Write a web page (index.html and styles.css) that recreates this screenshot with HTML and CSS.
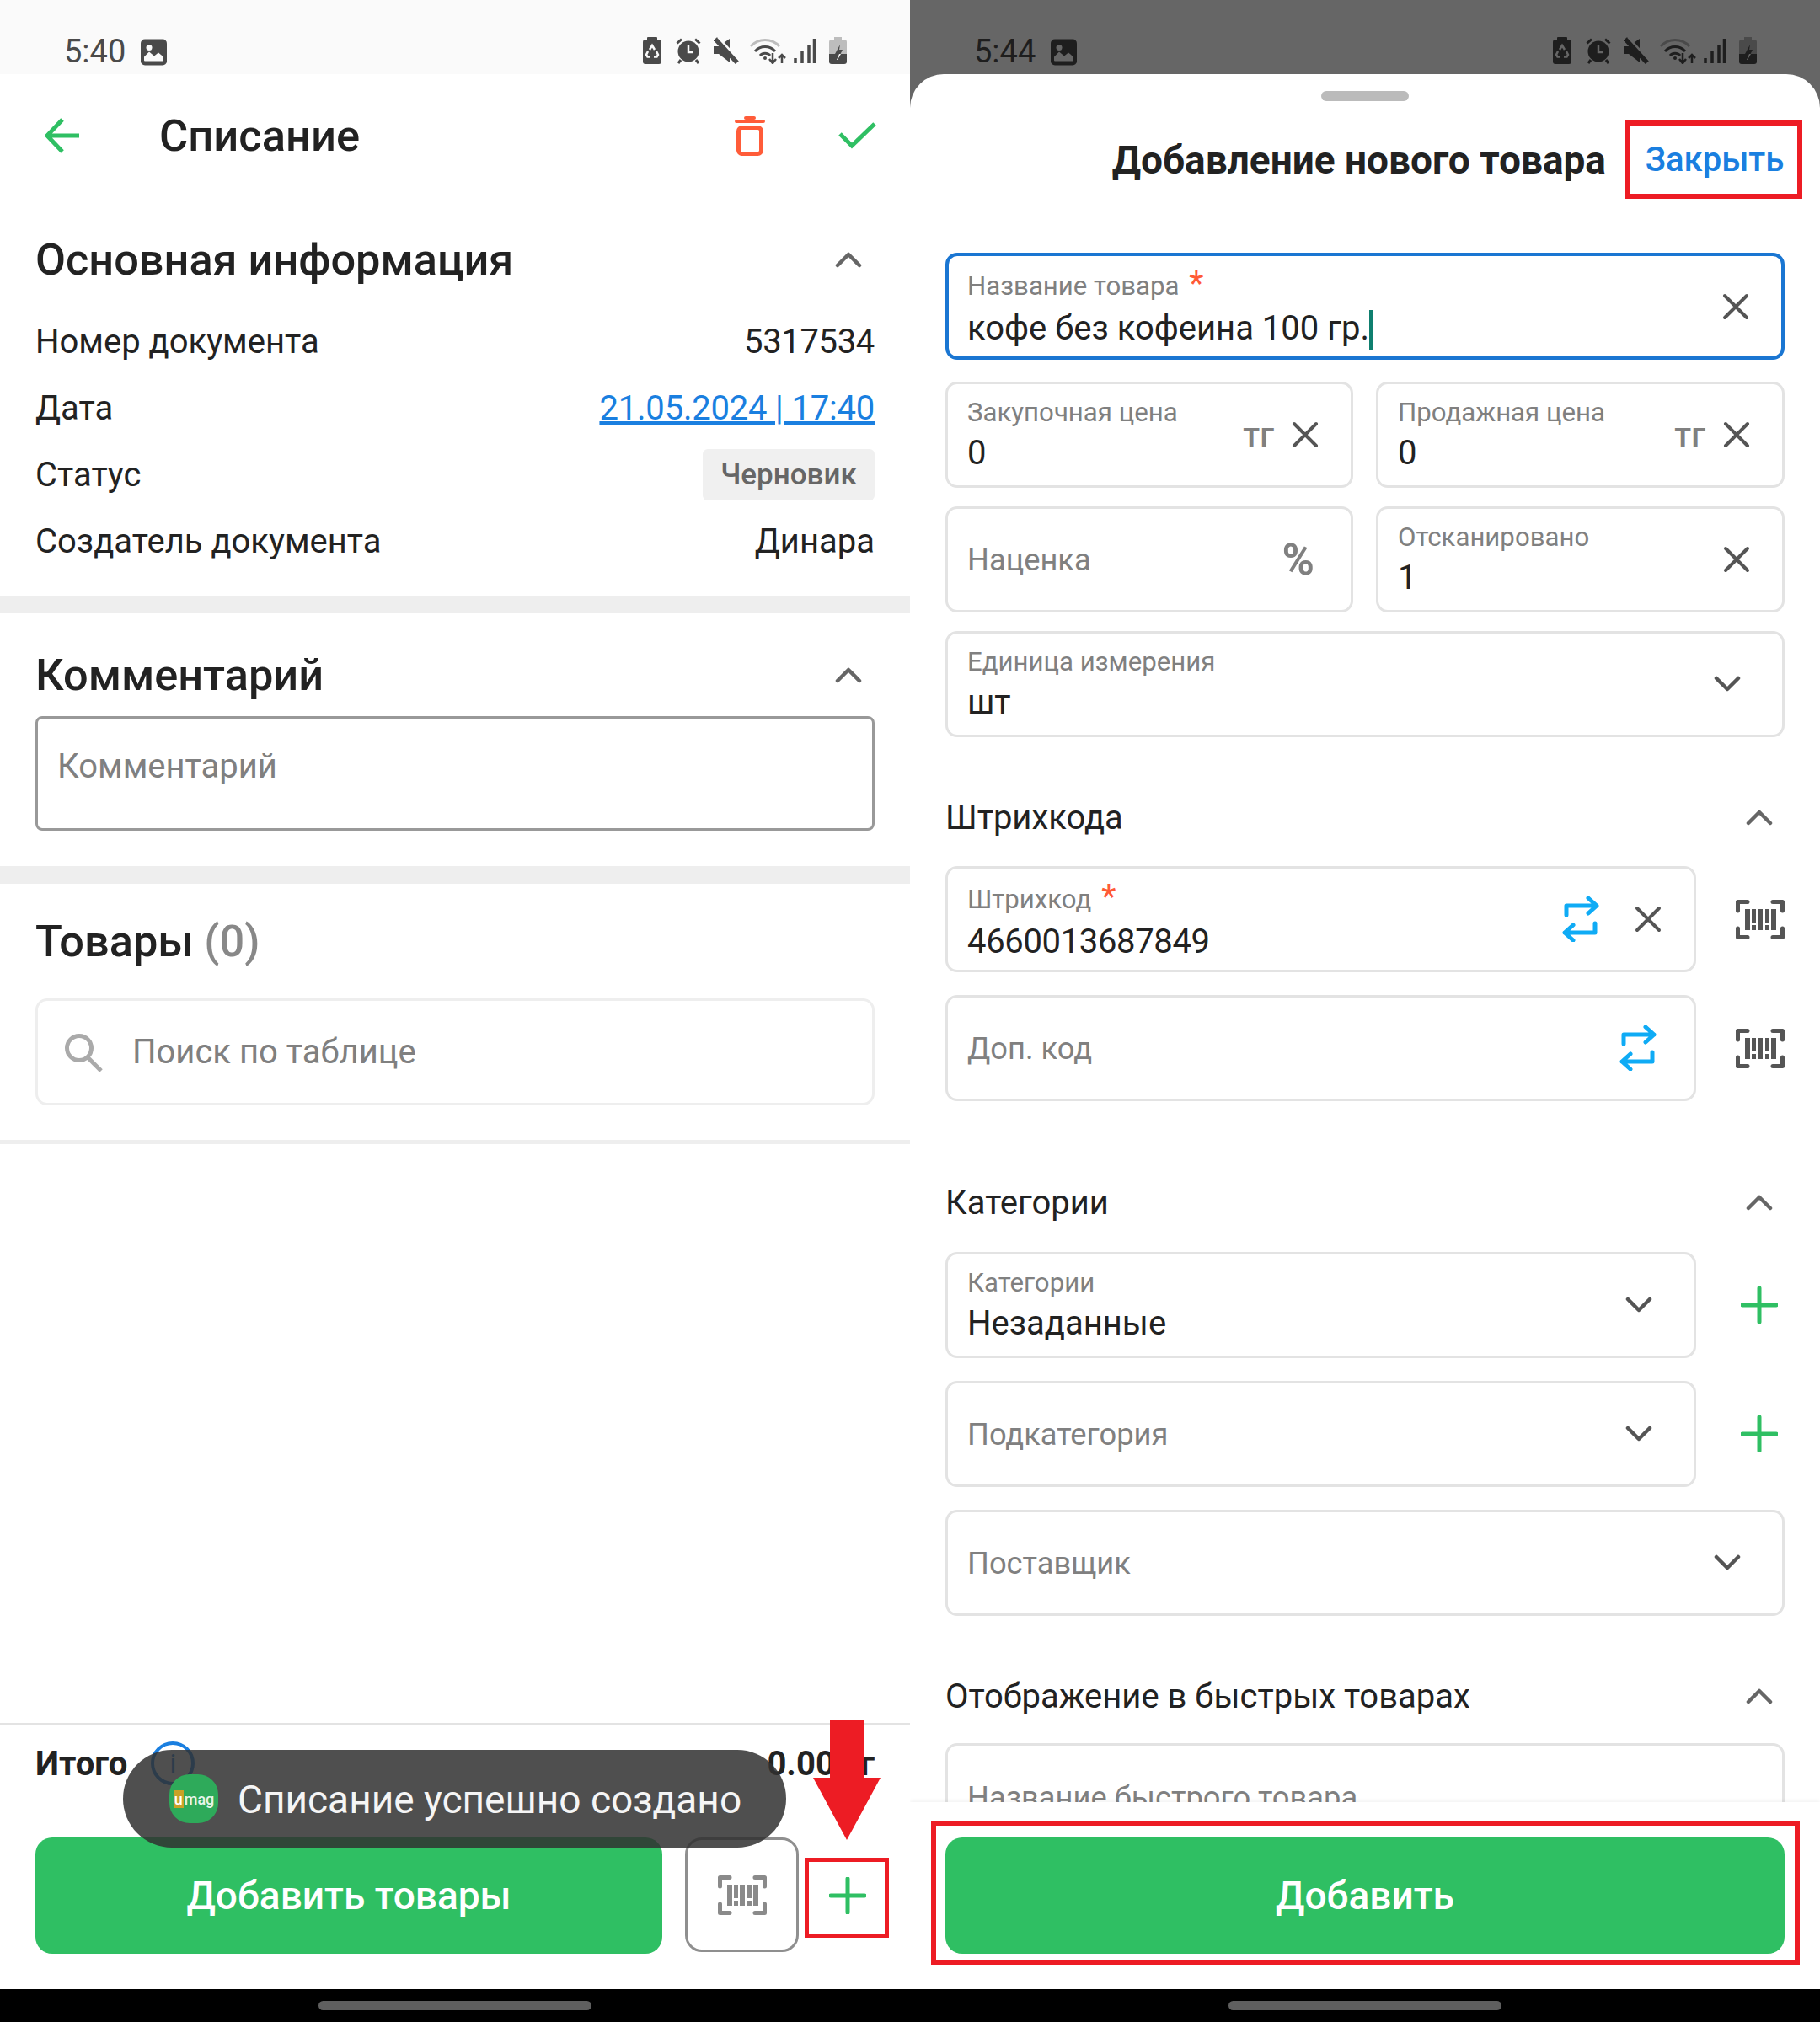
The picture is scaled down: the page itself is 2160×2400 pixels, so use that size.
FILE: index.html
```html
<!DOCTYPE html>
<html lang="ru">
<head>
    <meta charset="UTF-8">
    <meta name="viewport" content="width=device-width, initial-scale=1.0">
    <link rel="stylesheet" href="styles.css">
</head>
<body>
    <svg class="sprite" xmlns="http://www.w3.org/2000/svg">
        <symbol id="i-gallery" viewBox="0 0 31 31">
            <rect width="31" height="31" rx="5" fill="currentColor"/>
            <circle cx="10" cy="10" r="3.5" class="st-bg"/>
            <path d="M4 25v-4l6-6 6 5 5-4 6 5v4a1 1 0 0 1-1 1H5a1 1 0 0 1-1-1z" class="st-bg"/>
        </symbol>
        <symbol id="i-saver" viewBox="0 0 22 32">
            <path d="M6 0h10a1 1 0 0 1 1 1v2h2a3 3 0 0 1 3 3v23a3 3 0 0 1-3 3H3a3 3 0 0 1-3-3V6a3 3 0 0 1 3-3h2V1a1 1 0 0 1 1-1z" fill="currentColor"/>
            <path d="M8 15l3-5 3 5M16 17l2 4-1.500 2.500H13M9 23.500H5.500L4 21l2-4" fill="none" class="st-line"/>
        </symbol>
        <symbol id="i-alarm" viewBox="0 0 30 32">
            <circle cx="15" cy="17" r="12.500" fill="currentColor"/>
            <path d="M1.500 7.500L7 2.500M28.500 7.500L23 2.500M6 27l-3 4M24 27l3 4" stroke="currentColor" stroke-width="3" fill="none"/>
            <path d="M15 10v8h6" class="st-line" fill="none"/>
        </symbol>
        <symbol id="i-mute" viewBox="0 0 30 30">
            <path d="M0 10v9h6l13 10V1L6 10z" fill="currentColor"/>
            <path d="M2 1l26 28" stroke="currentColor" stroke-width="6"/>
            <path d="M5 -1l26 28" class="st-line"/>
        </symbol>
        <symbol id="i-wifi" viewBox="0 0 43 32">
            <path d="M1 11a23 23 0 0 1 34 0" fill="none" class="st-arc"/>
            <path d="M6 17a16 16 0 0 1 24 0M12 22a8 8 0 0 1 12 0" fill="none" stroke="currentColor" stroke-width="3"/>
            <circle cx="18" cy="25" r="2" fill="currentColor"/>
            <path d="M27 19v11M23 26l4 5 4-5M38 31V21M34 25l4-4 4 4" fill="none" stroke="currentColor" stroke-width="2.500"/>
        </symbol>
        <symbol id="i-signal" viewBox="0 0 26 30">
            <path d="M2 24v6M10 16v14M18 8v22M24.500 1v29" stroke="currentColor" stroke-width="3.500" fill="none"/>
        </symbol>
        <symbol id="i-battery" viewBox="0 0 21 32">
            <path d="M6 0h9v3h3a3 3 0 0 1 3 3v15H0V6a3 3 0 0 1 3-3h3z" class="st-top"/>
            <path d="M0 20h21v9a3 3 0 0 1-3 3H3a3 3 0 0 1-3-3z" fill="currentColor"/>
            <path d="M13 9l-6 11h5l-3 7 1 0 6-12h-4z" fill="currentColor"/>
            <path d="M9 27l3-7h2l-4 7z" class="st-bg"/>
        </symbol>
        <symbol id="i-close" viewBox="0 0 32 32">
            <path d="M3 3l26 26M29 3L3 29" fill="none" stroke="currentColor" stroke-width="4" stroke-linecap="round"/>
        </symbol>
        <symbol id="i-down" viewBox="0 0 32 20">
            <path d="M3 3l13 13L29 3" fill="none" stroke="currentColor" stroke-width="4.500" stroke-linecap="round" stroke-linejoin="round"/>
        </symbol>
        <symbol id="i-up" viewBox="0 0 32 20">
            <path d="M3 17L16 4l13 13" fill="none" stroke="currentColor" stroke-width="4.500" stroke-linecap="round" stroke-linejoin="round"/>
        </symbol>
        <symbol id="i-plus" viewBox="0 0 44 44">
            <path d="M22 2v40M2 22h40" fill="none" stroke="currentColor" stroke-width="5" stroke-linecap="round"/>
        </symbol>
        <symbol id="i-scan" viewBox="0 0 58 47">
            <path d="M14 2.500H2.500V13M44 2.500h11.500V13M14 44.500H2.500V34M44 44.500h11.500V34" fill="none" stroke="currentColor" stroke-width="5" stroke-linecap="round" stroke-linejoin="round"/>
            <path d="M11 11h6v25h-6zM19 11h5v16h-5zM19 30h5v6h-5zM26 11h6v25h-6zM35 11h5v16h-5zM35 30h5v6h-5zM42 11h6v25h-6z" fill="currentColor"/>
        </symbol>
        <symbol id="i-swap" viewBox="0 0 44 54">
            <path d="M5 22V11h36M31 2l10 9-10 9M39 32v11H3M13 34L3 43l10 9" fill="none" stroke="currentColor" stroke-width="5" stroke-linecap="round" stroke-linejoin="round"/>
        </symbol>
    </svg>

    <div class="screens">
        <!-- список -->
        <div class="screen screen-left">
            <div class="statusbar">
                <span class="clock">5:40</span>
                <svg class="st-gallery"><use href="#i-gallery"/></svg>
                <div class="status-icons">
                    <svg class="st-saver"><use href="#i-saver"/></svg>
                    <svg class="st-alarm"><use href="#i-alarm"/></svg>
                    <svg class="st-mute"><use href="#i-mute"/></svg>
                    <svg class="st-wifi"><use href="#i-wifi"/></svg>
                    <svg class="st-signal"><use href="#i-signal"/></svg>
                    <svg class="st-battery"><use href="#i-battery"/></svg>
                </div>
            </div>

            <div class="appbar">
                <svg class="back-icon" viewBox="0 0 42 42"><path d="M41 21H4M21 2L3 21l18 19" fill="none" stroke="#2fbf63" stroke-width="5"/></svg>
                <div class="appbar-title">Списание</div>
                <svg class="trash-icon" viewBox="0 0 36 47"><path d="M2 6h32M13 2h10" stroke="#ff5c39" stroke-width="4" stroke-linecap="round" fill="none"/><rect x="4.500" y="13.500" width="27" height="31" rx="4" fill="none" stroke="#ff5c39" stroke-width="5"/></svg>
                <svg class="check-icon" viewBox="0 0 45 34"><path d="M2 15l14 14L43 3" fill="none" stroke="#2fbf63" stroke-width="5"/></svg>
            </div>

            <div class="block-head block-main">
                <h2>Основная информация</h2>
                <svg class="chevron"><use href="#i-up"/></svg>
            </div>
            <div class="info">
                <div class="info-row"><span>Номер документа</span><span class="num">5317534</span></div>
                <div class="info-row"><span>Дата</span><a class="date-link num" href="#">21.05.2024 | 17:40</a></div>
                <div class="info-row"><span>Статус</span><span class="chip">Черновик</span></div>
                <div class="info-row"><span>Создатель документа</span><span>Динара</span></div>
            </div>
            <div class="divider first"></div>

            <div class="block-head block-comment">
                <h2>Комментарий</h2>
                <svg class="chevron"><use href="#i-up"/></svg>
            </div>
            <div class="comment-box">Комментарий</div>
            <div class="divider second"></div>

            <div class="block-head block-goods">
                <h2>Товары <span class="count">(0)</span></h2>
            </div>
            <div class="search-box">
                <svg class="search-icon" viewBox="0 0 46 46"><circle cx="18" cy="18" r="14.500" fill="none" stroke="#aaa" stroke-width="5"/><path d="M28 29l16 16" stroke="#aaa" stroke-width="5" fill="none"/></svg>
                <span>Поиск по таблице</span>
            </div>
            <div class="divider thin"></div>

            <div class="spacer"></div>

            <div class="bottom">
                <div class="total">
                    <span class="total-label">Итого</span>
                    <span class="info-circle">i</span>
                    <span class="total-sum">0.00 тг</span>
                </div>
                <div class="actions">
                    <button class="btn-green btn-goods">Добавить товары</button>
                    <div class="scan-btn"><svg class="scan-icon"><use href="#i-scan"/></svg></div>
                </div>
            </div>
            <div class="navbar"><div class="home-pill"></div></div>

            <svg class="plus-small"><use href="#i-plus"/></svg>
            <div class="mark-plus"></div>
            <svg class="mark-arrow" viewBox="0 0 80 143"><path d="M20 0h41v69h19L40 143 0 69h20z" fill="#ed1c24"/></svg>
            <div class="toast">
                <div class="toast-logo"><span class="logo-u">u</span>mag</div>
                <span>Списание успешно создано</span>
            </div>
        </div>

        <!-- новый товар -->
        <div class="screen screen-right">
            <div class="statusbar dim">
                <span class="clock">5:44</span>
                <svg class="st-gallery"><use href="#i-gallery"/></svg>
                <div class="status-icons">
                    <svg class="st-saver"><use href="#i-saver"/></svg>
                    <svg class="st-alarm"><use href="#i-alarm"/></svg>
                    <svg class="st-mute"><use href="#i-mute"/></svg>
                    <svg class="st-wifi"><use href="#i-wifi"/></svg>
                    <svg class="st-signal"><use href="#i-signal"/></svg>
                    <svg class="st-battery"><use href="#i-battery"/></svg>
                </div>
            </div>

            <div class="sheet">
                <div class="handle"></div>
                <div class="sheet-head">
                    <div class="sheet-title">Добавление нового товара</div>
                    <div class="sheet-close">Закрыть</div>
                </div>

                <div class="sheet-body">
                    <div class="field focused">
                        <div class="field-text">
                            <div class="label">Название товара <span class="req">*</span></div>
                            <div class="value">кофе без кофеина 100 гр.<span class="caret"></span></div>
                        </div>
                        <svg class="x-icon"><use href="#i-close"/></svg>
                    </div>

                    <div class="field-grid g1">
                        <div class="field">
                            <div class="field-text">
                                <div class="label">Закупочная цена</div>
                                <div class="value">0</div>
                            </div>
                            <span class="unit">тг</span>
                            <svg class="x-icon"><use href="#i-close"/></svg>
                        </div>
                        <div class="field">
                            <div class="field-text">
                                <div class="label">Продажная цена</div>
                                <div class="value">0</div>
                            </div>
                            <span class="unit">тг</span>
                            <svg class="x-icon"><use href="#i-close"/></svg>
                        </div>
                    </div>
                    <div class="field-grid g2">
                        <div class="field">
                            <div class="placeholder">Наценка</div>
                            <span class="percent">%</span>
                        </div>
                        <div class="field">
                            <div class="field-text">
                                <div class="label">Отсканировано</div>
                                <div class="value">1</div>
                            </div>
                            <svg class="x-icon"><use href="#i-close"/></svg>
                        </div>
                    </div>
                    <div class="field g3">
                        <div class="field-text">
                            <div class="label">Единица измерения</div>
                            <div class="value">шт</div>
                        </div>
                        <svg class="down-icon"><use href="#i-down"/></svg>
                    </div>

                    <div class="sub-head sh-codes">
                        <span>Штрихкода</span>
                        <svg class="chevron"><use href="#i-up"/></svg>
                    </div>
                    <div class="field-row">
                        <div class="field with-req">
                            <div class="field-text">
                                <div class="label">Штрихкод <span class="req">*</span></div>
                                <div class="value num">4660013687849</div>
                            </div>
                            <svg class="swap-icon"><use href="#i-swap"/></svg>
                            <svg class="x-icon"><use href="#i-close"/></svg>
                        </div>
                        <div class="row-side"><svg class="side-scan"><use href="#i-scan"/></svg></div>
                    </div>
                    <div class="field-row next">
                        <div class="field">
                            <div class="placeholder">Доп. код</div>
                            <svg class="swap-icon only"><use href="#i-swap"/></svg>
                        </div>
                        <div class="row-side"><svg class="side-scan"><use href="#i-scan"/></svg></div>
                    </div>

                    <div class="sub-head sh-cats">
                        <span>Категории</span>
                        <svg class="chevron"><use href="#i-up"/></svg>
                    </div>
                    <div class="field-row">
                        <div class="field">
                            <div class="field-text">
                                <div class="label">Категории</div>
                                <div class="value">Незаданные</div>
                            </div>
                            <svg class="down-icon"><use href="#i-down"/></svg>
                        </div>
                        <div class="row-side center"><svg class="side-plus"><use href="#i-plus"/></svg></div>
                    </div>
                    <div class="field-row next">
                        <div class="field">
                            <div class="placeholder">Подкатегория</div>
                            <svg class="down-icon"><use href="#i-down"/></svg>
                        </div>
                        <div class="row-side center"><svg class="side-plus"><use href="#i-plus"/></svg></div>
                    </div>
                    <div class="field g4">
                        <div class="placeholder">Поставщик</div>
                        <svg class="down-icon"><use href="#i-down"/></svg>
                    </div>

                    <div class="sub-head sh-quick">
                        <span>Отображение в быстрых товарах</span>
                        <svg class="chevron"><use href="#i-up"/></svg>
                    </div>
                    <div class="field g5">
                        <div class="placeholder">Название быстрого товара</div>
                    </div>
                </div>

                <div class="sheet-foot">
                    <div class="mark-add">
                        <button class="btn-green btn-add">Добавить</button>
                    </div>
                </div>
            </div>
            <div class="navbar"><div class="home-pill"></div></div>
        </div>
    </div>
</body>
</html>
```

FILE: styles.css
```css
* {
    box-sizing: border-box;
}
body {
    margin: 0;
    font-family: Roboto, 'Noto Sans', sans-serif;
    color: #222;
    background: #000;
}
.sprite {
    position: absolute;
    width: 0;
    height: 0;
}
.screens {
    display: flex;
    width: 2160px;
    height: 2400px;
}
.screen {
    position: relative;
    width: 1080px;
    height: 2400px;
    display: flex;
    flex-direction: column;
    background: #fff;
    overflow: hidden;
}
.screen-right {
    background: #666;
}

/* status bar */
.statusbar {
    --st-bg: #fafafa;
    --st-top: #bdbdbd;
    height: 88px;
    flex: none;
    display: flex;
    align-items: flex-start;
    padding: 45px 75px 0 76px;
    background: #fafafa;
    color: #4a4a4a;
}
.statusbar.dim {
    --st-bg: #666;
    --st-top: #4a4a4a;
    background: transparent;
    color: #1e1e1e;
}
.st-bg {
    fill: var(--st-bg);
}
.st-top {
    fill: var(--st-top);
}
.st-line {
    stroke: var(--st-bg);
    stroke-width: 2.5;
}
.st-arc {
    stroke: var(--st-top);
    stroke-width: 3;
}
.dim .st-arc {
    stroke: #1e1e1e;
}
.clock {
    font-size: 38px;
    line-height: 32px;
    margin-right: 18px;
}
.statusbar svg {
    display: block;
    height: 32px;
}
.st-gallery {
    width: 31px;
    margin-top: 1px;
}
.status-icons {
    margin-left: auto;
    margin-top: -1px;
    display: flex;
}
.st-saver { width: 22px; margin-right: 17px; }
.st-alarm { width: 30px; margin-right: 15px; }
.st-mute { width: 30px; margin-right: 13px; }
.st-wifi { width: 43px; margin-right: 9px; }
.st-signal { width: 26px; margin-right: 16px; }
.st-battery { width: 21px; }

/* app bar */
.appbar {
    height: 146px;
    flex: none;
    display: flex;
    align-items: center;
    padding: 0 40px 0 53px;
}
.back-icon {
    width: 42px;
    height: 42px;
}
.appbar-title {
    margin-left: 94px;
    font-size: 52.500px;
    font-weight: 500;
}
.trash-icon {
    margin-left: auto;
    width: 36px;
    height: 47px;
    margin-right: 87px;
}
.check-icon {
    width: 45px;
    height: 34px;
}

/* blocks */
.block-head {
    height: 80px;
    flex: none;
    display: flex;
    align-items: center;
    justify-content: space-between;
    padding: 0 57px 0 42px;
}
.block-head h2 {
    margin: 0;
    font-size: 52.300px;
    font-weight: 500;
}
.block-main { margin-top: 34px; margin-bottom: 1px; }
.block-comment { margin-top: 33px; }
.block-goods { margin-top: 28px; margin-bottom: 1px; }
.count {
    color: #888;
}
.chevron {
    width: 32px;
    height: 20px;
    color: #666;
}
.info {
    margin-top: 17px;
    padding: 0 42px;
    font-size: 40px;
}
.info-row {
    height: 79px;
    display: flex;
    align-items: center;
    justify-content: space-between;
}
.num {
    letter-spacing: -0.35px;
}
.date-link {
    color: #1a7fe0;
    letter-spacing: -0.2px;
}
.chip {
    height: 61px;
    width: 204px;
    display: flex;
    align-items: center;
    justify-content: center;
    background: #f0f0f0;
    border-radius: 6px;
    color: #666;
    font-size: 35px;
    font-weight: 500;
}
.divider {
    flex: none;
    height: 21px;
    background: #eee;
}
.divider.first { margin-top: 25px; }
.divider.second { margin-top: 42px; }
.divider.thin {
    height: 5px;
    margin-top: 41px;
}
.comment-box {
    flex: none;
    height: 136px;
    margin: 9px 42px 0;
    padding: 32px 23px 0;
    border: 3px solid #999;
    border-radius: 8px;
    color: #808080;
    font-size: 40px;
    line-height: 50px;
}
.search-box {
    flex: none;
    height: 127px;
    margin: 27px 42px 0;
    padding: 0 0 0 31px;
    display: flex;
    align-items: center;
    border: 3px solid #eee;
    border-radius: 14px;
    color: #808080;
    font-size: 40px;
}
.search-icon {
    width: 46px;
    height: 46px;
    margin-right: 35px;
}
.spacer {
    flex: 1;
}

/* bottom */
.bottom {
    flex: none;
    border-top: 3px solid #e3e3e3;
    padding: 0 42px 42px;
}
.total {
    height: 90px;
    margin-bottom: 43px;
    display: flex;
    align-items: center;
    font-size: 40px;
    font-weight: 700;
}
.total-label {
    margin-right: 28px;
}
.info-circle {
    width: 52px;
    height: 52px;
    border: 4px solid #1a7fe0;
    border-radius: 50%;
    color: #1a7fe0;
    display: flex;
    align-items: center;
    justify-content: center;
    font-size: 32px;
    font-weight: 400;
}
.total-sum {
    margin-left: auto;
}
.actions {
    display: flex;
    gap: 27px;
    height: 138px;
}
.btn-green {
    border: 0;
    padding: 0;
    background: #2fbf63;
    color: #fff;
    border-radius: 20px;
    font-family: inherit;
    font-size: 46px;
    font-weight: 500;
}
.btn-goods {
    width: 744px;
}
.scan-btn {
    width: 135px;
    height: 136px;
    border: 3px solid #8f8f8f;
    border-radius: 20px;
    display: flex;
    align-items: center;
    justify-content: center;
    color: #8a8a8a;
}
.scan-icon {
    width: 58px;
    height: 47px;
}
.navbar {
    height: 39px;
    flex: none;
    background: #000;
    padding-top: 14px;
    display: flex;
    justify-content: center;
}
.home-pill {
    width: 324px;
    height: 11px;
    border-radius: 6px;
    background: #5f5f5f;
}

/* overlays on the left screen */
.plus-small {
    position: absolute;
    left: 984px;
    top: 2228px;
    width: 44px;
    height: 44px;
    color: #2fbf63;
}
.mark-plus {
    position: absolute;
    left: 955px;
    top: 2205px;
    width: 100px;
    height: 95px;
    border: 5px solid #ed1c24;
}
.mark-arrow {
    position: absolute;
    left: 965px;
    top: 2041px;
    width: 80px;
    height: 143px;
}
.toast {
    position: absolute;
    left: 146px;
    top: 2077px;
    width: 787px;
    height: 116px;
    padding: 2px 0 0 55px;
    display: flex;
    align-items: center;
    gap: 23px;
    background: rgba(48, 48, 48, 0.85);
    border-radius: 58px;
    color: #f5f5f5;
    font-size: 46px;
}
.toast-logo {
    width: 58px;
    height: 58px;
    margin-top: -2px;
    border-radius: 24px;
    background: #2eaa5a;
    display: flex;
    align-items: center;
    justify-content: center;
    font-size: 18px;
    font-weight: 500;
    color: #e6f5ea;
}
.logo-u {
    background: #c9a227;
    color: #fff;
    padding: 0 1px;
    margin-right: 1px;
}

/* sheet */
.sheet {
    flex: 1;
    min-height: 0;
    display: flex;
    flex-direction: column;
    background: #fff;
    border-radius: 40px 40px 0 0;
}
.handle {
    flex: none;
    width: 104px;
    height: 12px;
    margin: 20px auto 0;
    border-radius: 6px;
    background: #bbb;
}
.sheet-head {
    flex: none;
    margin-top: 23px;
    padding-right: 21px;
    display: flex;
    justify-content: flex-end;
    align-items: center;
}
.sheet-title {
    margin-right: 23px;
    font-size: 46px;
    font-weight: 700;
}
.sheet-close {
    width: 210px;
    height: 93px;
    padding-left: 2px;
    border: 6px solid #ed1c24;
    display: flex;
    align-items: center;
    justify-content: center;
    color: #1a7fe0;
    font-size: 40px;
    font-weight: 500;
}
.sheet-body {
    flex: 1;
    min-height: 0;
    overflow: hidden;
    padding: 64px 42px 0 42px;
}
.field {
    height: 126px;
    display: flex;
    align-items: center;
    padding: 0 38px 0 23px;
    border: 3px solid #e3e3e3;
    border-radius: 14px;
    background: #fff;
}
.field.focused {
    height: 127px;
    padding-left: 22px;
    border-color: #1a76d2;
    border-width: 4px;
}
.field-text {
    flex: 1;
    min-width: 0;
    align-self: flex-start;
    padding-top: 14px;
}
.focused .field-text {
    padding-top: 16px;
}
.with-req .field-text {
    padding-top: 17px;
}
.label {
    color: #808080;
    font-size: 31.200px;
    line-height: 40px;
    white-space: nowrap;
}
.req {
    color: #ff5a36;
    font-size: 40px;
    line-height: 0;
    vertical-align: 0;
    margin-left: 4px;
}
.value {
    margin-top: 3px;
    font-size: 40px;
    line-height: 50px;
    white-space: nowrap;
}
.focused .value {
    margin-top: 5px;
}
.with-req .value {
    margin-top: 5px;
}
.caret {
    display: inline-block;
    width: 5px;
    height: 48px;
    margin-left: 0;
    vertical-align: middle;
    background: #0f7f6f;
}
.placeholder {
    flex: 1;
    color: #808080;
    font-size: 36.300px;
    white-space: nowrap;
}
.x-icon {
    flex: none;
    width: 32px;
    height: 32px;
    color: #555;
}
.unit {
    margin-right: 21px;
    color: #808080;
    font-size: 40px;
    font-weight: 500;
}
.percent {
    margin-right: 5px;
    color: #808080;
    font-size: 52px;
    font-weight: 700;
}
.down-icon {
    flex: none;
    width: 32px;
    height: 20px;
    margin-right: 11px;
    color: #555;
}
.swap-icon {
    flex: none;
    width: 44px;
    height: 54px;
    margin-right: 42px;
    color: #0fabf5;
}
.swap-icon.only {
    margin-right: 6px;
}
.field-grid {
    display: grid;
    grid-template-columns: 484px 485px;
    gap: 27px;
}
.g1 { margin-top: 26px; }
.g2 { margin-top: 22px; }
.g3 { margin-top: 22px; }
.g4 { margin-top: 27px; }
.g5 {
    margin-top: 26px;
    border-bottom: 0;
}
.sub-head {
    height: 60px;
    display: flex;
    align-items: center;
    justify-content: space-between;
    padding-right: 14px;
    font-size: 40px;
}
.sh-codes { margin-top: 65px; margin-bottom: 28px; }
.sh-cats { margin-top: 90px; margin-bottom: 29px; }
.sh-quick { margin-top: 65px; }
.field-row {
    display: flex;
}
.field-row .field {
    width: 891px;
}
.field-row.next {
    margin-top: 27px;
}
.row-side {
    flex: 1;
    display: flex;
    align-items: center;
    justify-content: flex-end;
}
.row-side.center {
    padding-right: 8px;
}
.side-scan {
    width: 58px;
    height: 47px;
    color: #555;
}
.side-plus {
    width: 44px;
    height: 44px;
    color: #2fbf63;
}
.sheet-foot {
    flex: none;
    height: 222px;
    padding: 22px 24px 0 25px;
    background: #fff;
    box-shadow: 0 -2px 4px rgba(0, 0, 0, 0.05);
    position: relative;
}
.mark-add {
    height: 171px;
    padding: 14px 12px 0 11px;
    border: 6px solid #ed1c24;
}
.btn-add {
    display: block;
    width: 100%;
    height: 138px;
}
```
